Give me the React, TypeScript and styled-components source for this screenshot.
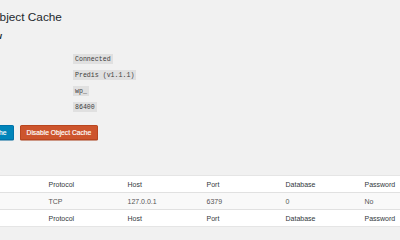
import styled, { createGlobalStyle } from 'styled-components';

const GlobalStyle = createGlobalStyle`
  html, body {
    margin: 0;
    padding: 0;
    background: #f1f1f1;
    overflow: hidden;
  }
  body {
    font-family: "Liberation Sans", Arial, sans-serif;
    color: #444;
  }
`;

const Wrap = styled.div`
    margin-left: -38px;
    padding-top: 9px;
    width: 520px;
`;

const Title = styled.h1`
    margin: 0 0 0 -5px;
    font-size: 11.8px;
    font-weight: 400;
    line-height: 16px;
    color: #23282d;
`;

const SubTitle = styled.h2`
    margin: 6px 0 0;
    font-size: 9px;
    font-weight: 700;
    line-height: 11px;
    color: #23282d;
`;

const FormTable = styled.div`
    margin-top: 9px;
    display: flex;
    flex-direction: column;
`;

const FormRow = styled.div`
    display: grid;
    grid-template-columns: 111px 1fr;
    align-items: center;
    height: 16px;
`;

const Label = styled.div`
    font-size: 6.5px;
    font-weight: 700;
    color: #23282d;
`;

const Code = styled.code`
    justify-self: start;
    font-family: "Liberation Mono", "DejaVu Sans Mono", monospace;
    font-size: 6.6px;
    line-height: 7px;
    padding: 1.5px 2px;
    background: rgba(0, 0, 0, 0.07);
    color: #3c3c3c;
`;

const Actions = styled.div`
    margin-top: 10px;
    display: flex;
    gap: 6px;
`;

const Button = styled.button<{ $tone: 'primary' | 'danger' }>`
    height: 15px;
    padding: 0 6px;
    border-radius: 1.5px;
    font-family: "Liberation Sans", Arial, sans-serif;
    font-size: 6.7px;
    line-height: 13px;
    color: #fff;
    cursor: pointer;
    -webkit-text-stroke: 0.15px #fff;
    background: ${p => (p.$tone === 'primary' ? '#0085ba' : '#cd552d')};
    border: 1px solid ${p => (p.$tone === 'primary' ? '#0073aa' : '#b9461f')};
    box-shadow: 0 0.5px 0 ${p => (p.$tone === 'primary' ? '#006799' : '#a83e1b')};
`;

const SectionTitle = styled(SubTitle)`
    margin-top: 13px;
`;

const Table = styled.table`
    margin-top: 11px;
    width: 519px;
    table-layout: fixed;
    border-collapse: collapse;
    background: #fff;
    border: 1px solid #e5e5e5;
    font-size: 7px;

    th, td {
        height: 16px;
        padding: 0 5px;
        text-align: left;
        font-weight: 400;
        white-space: nowrap;
    }
    th {
        color: #32373c;
    }
    td {
        color: #555;
    }
    thead tr {
        border-bottom: 1px solid #e1e1e1;
    }
    tbody tr {
        background: #f9f9f9;
    }
    tfoot tr {
        border-top: 1px solid #e1e1e1;
    }
`;

const columns = ['Alias', 'Protocol', 'Host', 'Port', 'Database', 'Password'];
const server = ['Master', 'TCP', '127.0.0.1', '6379', '0', 'No'];

const overview = [
    { label: 'Status:', value: 'Connected' },
    { label: 'Client:', value: 'Predis (v1.1.1)' },
    { label: 'Key Prefix:', value: 'wp_' },
    { label: 'Max. TTL:', value: '86400' },
];

const HeadRow = () => (
    <tr>
        {columns.map(c => (
            <th key={c}>{c}</th>
        ))}
    </tr>
);

const App = () => {
    return (
        <>
            <GlobalStyle />
            <Wrap>
                <Title>Redis Object Cache</Title>
                <SubTitle>Overview</SubTitle>

                <FormTable>
                    {overview.map(row => (
                        <FormRow key={row.label}>
                            <Label>{row.label}</Label>
                            <Code>{row.value}</Code>
                        </FormRow>
                    ))}
                </FormTable>

                <Actions>
                    <Button $tone="primary">Flush Cache</Button>
                    <Button $tone="danger">Disable Object Cache</Button>
                </Actions>

                <SectionTitle>Servers</SectionTitle>

                <Table>
                    <colgroup>
                        <col style={{ width: 81 }} />
                        <col style={{ width: 79 }} />
                        <col style={{ width: 79 }} />
                        <col style={{ width: 79 }} />
                        <col style={{ width: 79 }} />
                        <col style={{ width: 122 }} />
                    </colgroup>
                    <thead>
                        <HeadRow />
                    </thead>
                    <tbody>
                        <tr>
                            {server.map((v, i) => (
                                <td key={i}>{v}</td>
                            ))}
                        </tr>
                    </tbody>
                    <tfoot>
                        <HeadRow />
                    </tfoot>
                </Table>
            </Wrap>
        </>
    );
};

export default App;
